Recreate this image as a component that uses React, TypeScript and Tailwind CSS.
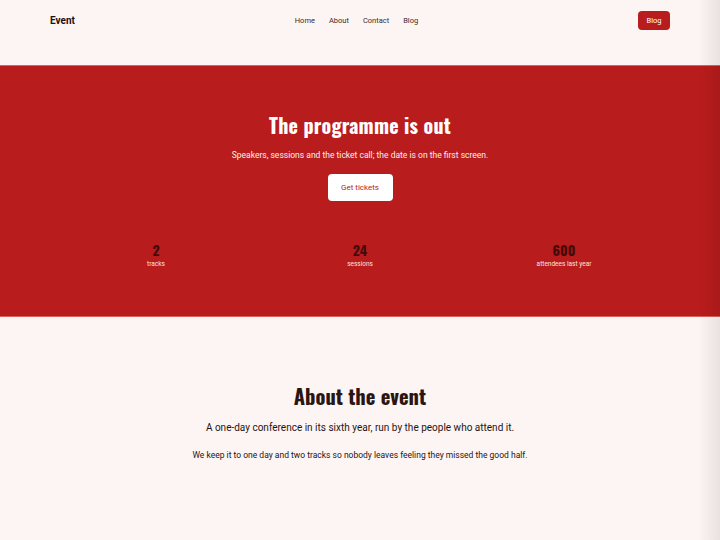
import React from 'react';

const heading = "font-['Oswald','Liberation_Sans_Narrow','DejaVu_Sans_Condensed',sans-serif]";

const stats = [
  { value: '2', label: 'tracks' },
  { value: '24', label: 'sessions' },
  { value: '600', label: 'attendees last year' },
];

export default function App() {
  return (
    <div className="relative min-h-[540px] bg-[#fdf5f3] font-['Roboto',sans-serif] text-[#1f1413] overflow-hidden">
      {/* Top nav */}
      <header className="h-[65px] px-[50px] pt-[11px] flex justify-between items-start">
        <div className="h-[19px] flex items-center text-[10px] font-bold text-[#1a1110]">Event</div>
        <nav className="h-[19px] flex items-center gap-[14px] text-[7.5px] text-[#3a2a28]">
          <a>Home</a>
          <a>About</a>
          <a>Contact</a>
          <a>Blog</a>
        </nav>
        <button className="h-[19px] w-[32px] rounded-[4px] bg-[#b91c1c] text-white text-[7.5px] flex items-center justify-center">
          Blog
        </button>
      </header>

      {/* Hero */}
      <section className="bg-[#b91c1c] border-y border-[#d9625c] h-[252px] pt-[45px] flex flex-col items-center text-white">
        <h1 className={`${heading} text-[20px] font-bold leading-[28px] tracking-[0.2px]`}>The programme is out</h1>
        <p className="mt-[10px] text-[8.5px] leading-[12px] text-[#fdeeed]">
          Speakers, sessions and the ticket call; the date is on the first screen.
        </p>
        <button className="mt-[13px] h-[27px] w-[65px] rounded-[4px] bg-white text-[#b91c1c] text-[8px]">
          Get tickets
        </button>
        <div className="mt-[39px] w-[612px] grid grid-cols-3 text-center">
          {stats.map((s) => (
            <div key={s.label} className="flex flex-col items-center">
              <span className={`${heading} text-[14px] font-bold leading-[19px] text-[#450a0a]`}>{s.value}</span>
              <span className="mt-[1px] text-[6.5px] leading-[9px] text-[#fde2df]">{s.label}</span>
            </div>
          ))}
        </div>
      </section>

      {/* About */}
      <section className="pt-[65px] pb-[60px] flex flex-col items-center text-center">
        <h2 className={`${heading} text-[20.5px] font-bold leading-[28px] text-[#2a1512]`}>About the event</h2>
        <p className="mt-[11px] text-[10px] leading-[14px] text-[#1f1413]">
          A one-day conference in its sixth year, run by the people who attend it.
        </p>
        <p className="mt-[14px] text-[8.5px] leading-[12px] text-[#1f1413]">
          We keep it to one day and two tracks so nobody leaves feeling they missed the good half.
        </p>
      </section>

      {/* right edge fade */}
      <div className="pointer-events-none absolute top-0 right-0 h-full w-[22px] bg-gradient-to-r from-transparent to-black/[0.08]" />
    </div>
  );
}
